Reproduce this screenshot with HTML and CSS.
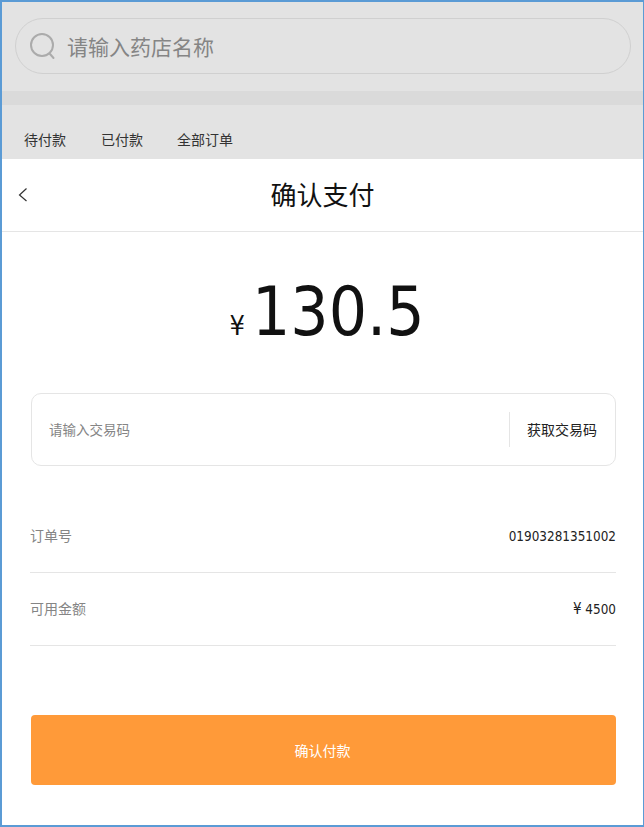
FILE: index.html
```html
<!DOCTYPE html>
<html lang="zh">
<head>
<meta charset="utf-8">
<title>确认支付</title>
<link rel="stylesheet" href="styles.css">
</head>
<body>
<div class="frame">
  <div class="backdrop">
    <div class="search">
      <svg class="search-icon" width="28" height="28" viewBox="0 0 28 28" fill="none" stroke="#ababab" stroke-width="2">
        <circle cx="13" cy="13" r="11"/>
        <path d="M21 22l3.5 4" stroke-linecap="round"/>
      </svg>
      <span class="search-text">请输入药店名称</span>
    </div>
    <div class="band"></div>
    <div class="tabs">
      <span>待付款</span>
      <span>已付款</span>
      <span>全部订单</span>
    </div>
  </div>
  <div class="sheet">
    <header class="title-bar">
      <svg class="back" width="10" height="16" viewBox="0 0 10 16" fill="none" stroke="#333" stroke-width="1.2">
        <path d="M8.5 1.5L1.5 8l7 6"/>
      </svg>
      <h1>确认支付</h1>
    </header>
    <div class="amount"><span class="currency">¥</span><span class="value">130.5</span></div>
    <div class="code-box">
      <span class="code-hint">请输入交易码</span>
      <span class="code-btn">获取交易码</span>
    </div>
    <div class="row"><span class="row-label">订单号</span><span class="row-value">01903281351002</span></div>
    <div class="row"><span class="row-label">可用金额</span><span class="row-value"><span class="row-yen">¥</span> 4500</span></div>
    <button class="pay">确认付款</button>
  </div>
</div>
</body>
</html>
```
FILE: styles.css
```css
* { box-sizing: border-box; }
html, body { margin: 0; padding: 0; }
body {
  width: 644px;
  height: 827px;
  font-family: "DejaVu Sans Condensed", "Liberation Sans", "Noto Sans CJK SC", sans-serif;
  background: #fff;
  overflow: hidden;
}
.frame {
  width: 644px;
  height: 827px;
  border: 2px solid #5b9bd5;
  border-right-width: 1px;
  display: flex;
  flex-direction: column;
}
.backdrop {
  height: 157px;
  background: #e3e3e3;
  padding-top: 16px;
  flex: none;
}
.search {
  margin-left: 13px;
  width: 616px;
  height: 56px;
  border: 1px solid #d0d0d0;
  border-radius: 28px;
  display: flex;
  align-items: center;
  padding-left: 13px;
  gap: 10px;
}
.search-text { font-family: "Noto Sans CJK SC", sans-serif; font-size: 21px; color: #858585; }
.band { height: 14px; margin-top: 17px; background: #dadada; }
.tabs {
  display: flex;
  padding: 26px 0 0 22px;
  gap: 35px;
  font-family: "Noto Sans CJK SC", sans-serif;
  font-size: 14px;
  line-height: 16px;
  color: #333;
}
.tabs span:last-child { margin-left: -1px; }
.sheet { flex: 1; display: flex; flex-direction: column; }
.title-bar {
  height: 73px;
  border-bottom: 1px solid #e5e5e5;
  display: flex;
  align-items: center;
  justify-content: center;
  position: relative;
  flex: none;
}
.back { position: absolute; left: 16px; top: 28px; }
.title-bar h1 {
  margin: 0 0 3px;
  font-family: "Noto Sans CJK SC", sans-serif;
  font-size: 26px;
  line-height: 34px;
  font-weight: 400;
  color: #111;
}
.amount {
  height: 161px;
  display: flex;
  align-items: baseline;
  justify-content: center;
  padding-top: 38px;
  padding-left: 9px;
  color: #111;
  flex: none;
}
.currency { font-size: 27px; margin-right: 7px; }
.value { font-size: 67px; line-height: 84px; }
.code-box {
  margin-left: 29px;
  width: 585px;
  height: 73px;
  border: 1px solid #e5e5e5;
  border-radius: 10px;
  display: flex;
  align-items: center;
  justify-content: space-between;
  padding: 0 18px 0 17px;
  font-family: "Noto Sans CJK SC", sans-serif;
  flex: none;
}
.code-hint { color: #858585; font-size: 13.5px; line-height: 20px; margin-bottom: 2px; }
.code-btn {
  color: #222;
  font-size: 14px;
  border-left: 1px solid #e5e5e5;
  line-height: 35px;
  padding-left: 17px;
}
.row {
  margin-left: 28px;
  width: 586px;
  height: 73px;
  border-bottom: 1px solid #e5e5e5;
  display: flex;
  align-items: center;
  justify-content: space-between;
  flex: none;
}
.code-box + .row { margin-top: 34px; }
.row-label {
  color: #858585;
  font-family: "Noto Sans CJK SC", sans-serif;
  font-size: 14px;
  line-height: 20px;
  margin-bottom: 2px;
}
.row-value { color: #222; font-size: 13.4px; line-height: 20px; margin-top: 1px; }
.row-yen { font-size: 15px; }
.pay {
  margin: 69px 0 0 29px;
  width: 585px;
  height: 70px;
  border: 0;
  border-radius: 4px;
  background: #ff9a39;
  color: #fff;
  font-family: "Noto Sans CJK SC", sans-serif;
  font-size: 14px;
  padding: 0 2px 0 0;
  flex: none;
}
```
